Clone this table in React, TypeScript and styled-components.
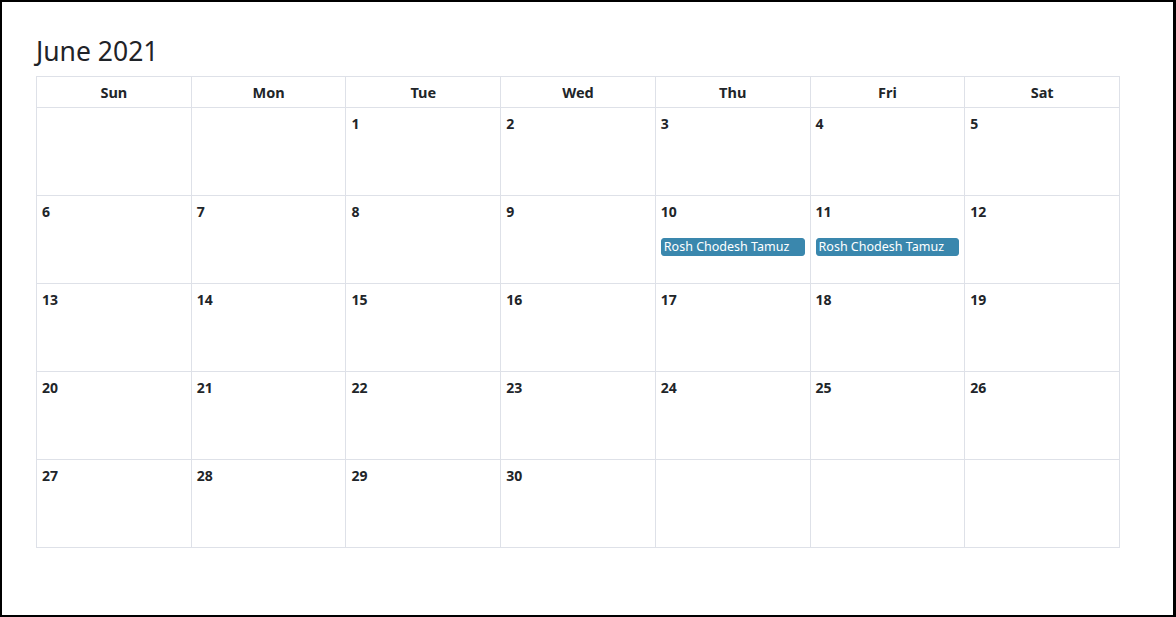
import styled, { createGlobalStyle } from "styled-components";

const GlobalStyle = createGlobalStyle`
  html, body {
    margin: 0;
    padding: 0;
    background: #ffffff;
  }
  body {
    font-family: "Noto Sans", "Open Sans", sans-serif;
    color: #212529;
  }
`;

const Frame = styled.div`
  box-sizing: border-box;
  width: 1176px;
  height: 617px;
  border-style: solid;
  border-color: #000000;
  border-width: 2px 3px 2px 2px;
  padding: 33px 0 0 34px;
  overflow: hidden;
`;

const Title = styled.h2`
  margin: 0 0 8px;
  font-size: 26.5px;
  font-weight: 400;
  line-height: 33px;
  color: #1f2328;
`;

const Grid = styled.div`
  width: 1084px;
  box-sizing: border-box;
  display: grid;
  grid-template-columns: repeat(7, 1fr);
  grid-template-rows: 31px repeat(5, 88px);
  border-top: 1px solid #dee1e8;
  border-left: 1px solid #dee1e8;
`;

const HeadCell = styled.div`
  border-right: 1px solid #dee1e8;
  border-bottom: 1px solid #dee1e8;
  display: flex;
  align-items: center;
  justify-content: center;
  font-size: 14.5px;
  font-weight: 700;
  color: #212529;
`;

const DayCell = styled.div`
  border-right: 1px solid #dee1e8;
  border-bottom: 1px solid #dee1e8;
  padding: 6px 5px 0;
  display: flex;
  flex-direction: column;
  min-width: 0;
`;

const DayNum = styled.div`
  font-size: 14px;
  font-weight: 700;
  line-height: 20px;
  color: #212529;
`;

const Event = styled.div`
  margin-top: 16px;
  background: #3a87ad;
  border: 1px solid #3a87ad;
  border-radius: 3px;
  color: #ffffff;
  font-size: 12.5px;
  line-height: 16px;
  padding: 0 2px;
  white-space: nowrap;
  overflow: hidden;
`;

const days = ["Sun", "Mon", "Tue", "Wed", "Thu", "Fri", "Sat"];

const events: Record<number, string> = {
  10: "Rosh Chodesh Tamuz",
  11: "Rosh Chodesh Tamuz",
};

const cells: (number | null)[] = [];
for (let i = 0; i < 2; i++) cells.push(null);
for (let d = 1; d <= 30; d++) cells.push(d);
while (cells.length < 35) cells.push(null);

const App = () => {
  return (
    <>
      <GlobalStyle />
      <Frame>
        <Title>June 2021</Title>
        <Grid>
          {days.map((d) => (
            <HeadCell key={d}>{d}</HeadCell>
          ))}
          {cells.map((d, i) => (
            <DayCell key={i}>
              {d !== null && <DayNum>{d}</DayNum>}
              {d !== null && events[d] && <Event>{events[d]}</Event>}
            </DayCell>
          ))}
        </Grid>
      </Frame>
    </>
  );
};

export default App;
